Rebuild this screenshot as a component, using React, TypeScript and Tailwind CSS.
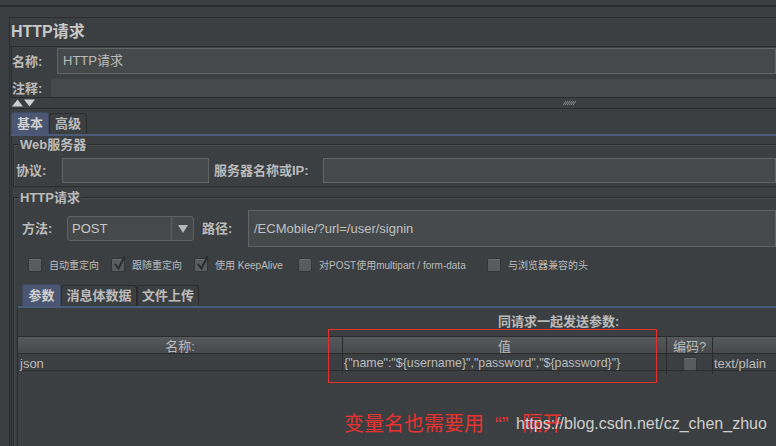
import React from "react";

const line = "border-[#2b2b2b]";
const label = "text-[13px] font-bold text-[#bbbbbb] whitespace-nowrap leading-none";
const field = "bg-[#45494a] border border-[#646464]";

function Check({ checked }: { checked?: boolean }) {
  return (
    <span className="relative w-[14px] h-[14px] shrink-0 rounded-[2px] bg-[#595c5e] border border-[#333537] shadow-[inset_0_1px_0_#6b6e70]">
      {checked && (
        <svg className="absolute left-[1px] -top-[4px]" width="13" height="16" viewBox="0 0 13 16">
          <path d="M2 9 L5.5 13.5 L11.5 1.5" fill="none" stroke="#2a2b2c" strokeWidth="2" />
        </svg>
      )}
    </span>
  );
}

function Option({ w, checked, text }: { w: string; checked?: boolean; text: string }) {
  return (
    <div className={`flex items-center ${w}`}>
      <Check checked={checked} />
      <span className="ml-[7px] text-[10px] text-[#bbbbbb] whitespace-nowrap">{text}</span>
    </div>
  );
}

function Tab({ text, active, w }: { text: string; active?: boolean; w: string }) {
  return (
    <div
      className={`${w} flex items-center justify-center rounded-t-[3px] border border-b-0 text-[13px] font-bold whitespace-nowrap ${
        active
          ? "h-[22px] bg-[#4a5672] border-[#3f4a62] text-[#d0d0d0]"
          : "h-[21px] bg-[#3c3f41] border-[#2b2b2b] text-[#bbbbbb]"
      }`}
    >
      {text}
    </div>
  );
}

function Fieldset({ title, className, children }: { title: string; className: string; children: React.ReactNode }) {
  return (
    <div className={`relative border-l border-t ${line} shadow-[inset_1px_1px_0_#4a4d4f] ${className}`}>
      <span className="absolute left-[5px] -top-[8px] px-[1px] bg-[#3c3f41] text-[13px] font-bold leading-[15px] text-[#bbbbbb]">
        {title}
      </span>
      {children}
    </div>
  );
}

export default function App() {
  return (
    <div className="relative w-[776px] h-[446px] overflow-hidden bg-[#3c3f41] text-[#bbbbbb] font-['Liberation_Sans','Noto_Sans_CJK_SC',sans-serif]">
      <div className="h-[5px]" />
      <div className="h-[2px] bg-[#2b2d2f]" />
      <div className="h-[10px]" />

      {/* main panel */}
      <div className={`ml-[9px] h-[429px] border-l border-t ${line}`}>
        <div className={`h-[29px] flex items-center pl-[1px] border-b ${line} text-[16px] font-bold text-[#c8c8c8]`}>
          HTTP请求
        </div>

        {/* name / comment */}
        <div className={`ml-[1px] h-[51px] pt-[1px] border-l border-b ${line}`}>
          <div className="flex items-center h-[26px]">
            <span className={`${label} w-[45px]`}>名称:</span>
            <div className={`${field} flex-1 h-[26px] flex items-center pl-[5px] text-[13px]`}>HTTP请求</div>
          </div>
          <div className="flex items-center h-[18px] mt-[5px]">
            <span className={`${label} w-[39px]`}>注释:</span>
            <div className="bg-[#45494a] flex-1 h-[18px]" />
          </div>
        </div>

        {/* splitter */}
        <div className={`relative h-[11px] border-b ${line}`}>
          <svg className="absolute left-[2px] top-[1px]" width="24" height="8" viewBox="0 0 24 8">
            <polygon points="0,7.5 5.5,0.5 11,7.5" fill="#cfcfcf" />
            <polygon points="12,0.5 23,0.5 17.5,7.5" fill="#cfcfcf" />
          </svg>
          <svg className="absolute left-[553px] top-[3px]" width="13" height="4" viewBox="0 0 13 4">
            {[0, 2, 4, 6, 8, 10].map((x) => (
              <line key={x} x1={x} y1="4" x2={x + 3} y2="0" stroke="#8a8a8a" strokeWidth="1" />
            ))}
          </svg>
        </div>

        {/* tabs: 基本 / 高级 */}
        <div className="ml-[1px] pt-[3px] flex items-end">
          <Tab text="基本" active w="w-[38px]" />
          <Tab text="高级" w="w-[38px]" />
        </div>
        <div className="ml-[1px] h-[2px] bg-[#4b5b7c]" />

        <div className={`ml-[1px] h-[311px] border-l ${line} pl-[1px] pt-[8px]`}>
          <Fieldset title="Web服务器" className="h-[43px] border-b pt-[13px] pl-[2px]">
            <div className="flex items-center h-[25px]">
              <span className={`${label} w-[46px]`}>协议:</span>
              <div className={`${field} w-[147px] h-[25px]`} />
              <span className={`${label} ml-[5px] w-[109px]`}>服务器名称或IP:</span>
              <div className={`${field} flex-1 h-[25px]`} />
            </div>
          </Fieldset>

          <Fieldset title="HTTP请求" className="mt-[10px] h-[250px] pt-[12px] pl-[8px]">
            <div className="flex items-center h-[37px]">
              <span className={`${label} w-[45px]`}>方法:</span>
              <div className="w-[127px] h-[25px] flex rounded-[3px] border border-[#5e6162] bg-[#45494a]">
                <div className="w-[104px] flex items-center pl-[4px] text-[13px] text-[#c8c8c8] border-r border-[#5e6162]">POST</div>
                <div className="flex-1 flex items-center justify-center">
                  <svg width="10" height="8" viewBox="0 0 10 8">
                    <polygon points="0,0 10,0 5,8" fill="#b8b8b8" />
                  </svg>
                </div>
              </div>
              <span className={`${label} ml-[8px] w-[46px]`}>路径:</span>
              <div className={`${field} flex-1 h-[37px] flex items-center pl-[5px] text-[13px] text-[#c0c0c0]`}>
                /ECMobile/?url=/user/signin
              </div>
            </div>

            <div className="flex items-center h-[14px] mt-[11px] pl-[6px]">
              <Option w="w-[83px]" text="自动重定向" />
              <Option w="w-[83px]" checked text="跟随重定向" />
              <Option w="w-[104px]" checked text="使用 KeepAlive" />
              <Option w="w-[189px]" text="对POST使用multipart / form-data" />
              <Option w="w-[120px]" text="与浏览器兼容的头" />
            </div>

            {/* tabs: 参数 / 消息体数据 / 文件上传 */}
            <div className="mt-[12px] flex items-end">
              <Tab text="参数" active w="w-[39px]" />
              <Tab text="消息体数据" w="w-[76px]" />
              <Tab text="文件上传" w="w-[62px]" />
            </div>
            <div className="-ml-[4px] h-[2px] bg-[#4b5b7c]" />

            <div className={`-ml-[5px] h-[200px] border-l ${line}`}>
              <div className="h-[28px] flex items-center pl-[480px] text-[13px] font-bold text-[#bbbbbb] whitespace-nowrap">
                同请求一起发送参数:
              </div>
              <div className={`grid grid-cols-[325px_324px_46px_1fr] h-[18px] border-t border-b ${line} bg-gradient-to-b from-[#56595c] to-[#47494c] text-[13px] text-[#bbbbbb]`}>
                <div className={`flex items-center justify-center border-r ${line}`}>名称:</div>
                <div className={`flex items-center justify-center border-r ${line}`}>值</div>
                <div className={`flex items-center justify-center border-r ${line}`}>编码?</div>
                <div />
              </div>
              <div className={`grid grid-cols-[325px_324px_46px_1fr] h-[17px] border-b ${line} text-[13px] text-[#bbbbbb]`}>
                <div className={`flex items-center pl-[2px] border-r ${line}`}>json</div>
                <div className={`flex items-center pl-[1px] border-r ${line} text-[12.4px] whitespace-nowrap`}>
                  {'{"name":"${username}","password","${password}"}'}
                </div>
                <div className={`flex items-center justify-center border-r ${line}`}>
                  <Check />
                </div>
                <div className="flex items-center pl-[1px]">text/plain</div>
              </div>
            </div>
          </Fieldset>
        </div>
      </div>

      {/* annotations */}
      <div className="absolute left-[328px] top-[329px] w-[329px] h-[54px] border border-[#e3302f]" />
      <div className="absolute left-[344px] top-[414px] flex text-[20px] leading-[20px] text-[#e8322f] whitespace-nowrap">
        <span>变量名也需要用</span>
        <span className="ml-[11px]">“”</span>
        <span className="ml-[14px]">隔开</span>
      </div>
      <div className="absolute left-[516px] top-[416px] text-[16px] leading-[16px] text-white/75 whitespace-nowrap">
        https://blog.csdn.net/cz_chen_zhuo
      </div>
    </div>
  );
}
